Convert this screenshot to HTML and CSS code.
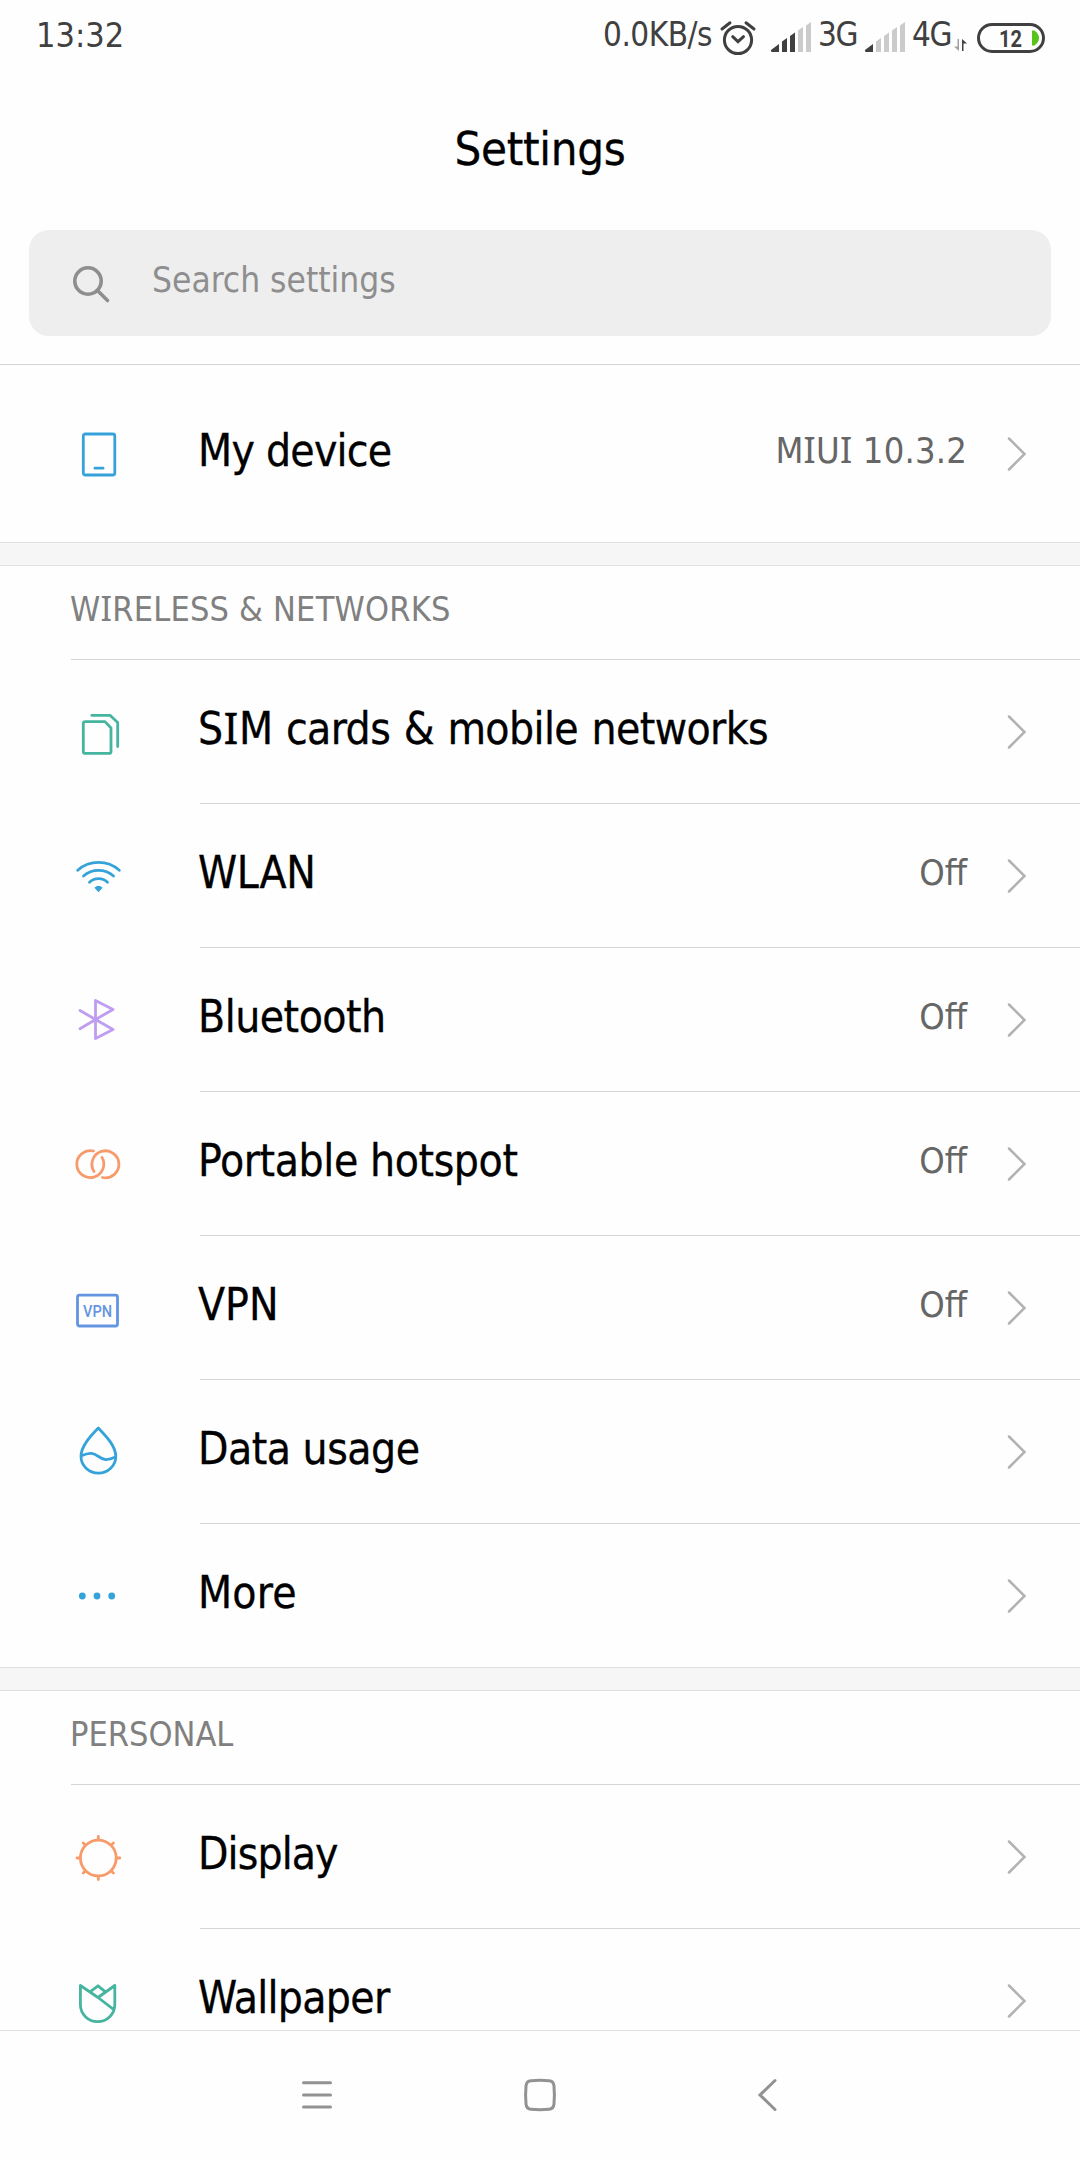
FILE: index.html
```html
<!DOCTYPE html>
<html lang="en">
<head>
<meta charset="utf-8">
<title>Settings</title>
<link rel="stylesheet" href="styles.css">
</head>
<body>
<div class="screen">
  <header class="statusbar">
    <span class="clock">13:32</span>
    <div class="status-right">
      <span class="speed">0.0KB/s</span>
      <svg class="alarm" width="36" height="36" viewBox="0 0 36 36"><circle cx="18" cy="20" r="13.6"/><path d="M2 9 10 2.8M34 9 26 2.8M12.7 16.7 18 21.6 23.5 16.7"/></svg>
      <svg class="signal" width="40" height="30" viewBox="0 0 40 30"><path d="M0 29.500 V28 L8 22V30H1zM11 19.500 16 16V30H11zM19 14 24 10.500V30H19z"/><path class="dim" d="M27 8.500 32 5V30H27zM35 3.500 40 0V30H35z"/></svg>
      <span class="net net-3g">3G</span>
      <svg class="signal" width="40" height="30" viewBox="0 0 40 30"><path d="M0 29.500 V28 L8 22V30H1z"/><path class="dim" d="M11 19.500 16 16V30H11zM19 14 24 10.500V30H19zM27 8.500 32 5V30H27zM35 3.500 40 0V30H35z"/></svg>
      <span class="net net-4g">4G</span>
      <svg class="updown" width="13" height="13" viewBox="0 0 13 13"><path class="dim" d="M5 0V12L0 7.500H3.500V0z"/><path d="M8 12V0L13 4.500H9.500V12z"/></svg>
      <svg class="battery" width="68" height="30" viewBox="0 0 68 30"><rect x="1.500" y="1.500" width="65" height="27" rx="13.500"/><path d="M55 7.500h2.500Q62 11 62 15T57.500 22.500H55z"/><text x="22" y="24" textLength="23" lengthAdjust="spacingAndGlyphs">12</text></svg>
    </div>
  </header>

  <h1 class="title">Settings</h1>

  <div class="search">
    <svg width="38" height="38" viewBox="0 0 38 38"><circle cx="15" cy="15" r="13.200"/><path d="M24.500 24.500 34.500 34.500"/></svg>
    <span>Search settings</span>
  </div>

  <main class="list">
    <section class="group group-device">
      <a class="row">
        <svg class="icon blue" viewBox="0 0 48 48"><rect x="9.300" y="4" width="31.500" height="41" rx="2"/><path d="M21 38.200H29"/></svg>
        <span class="label w-device">My device</span><span class="value w-miui">M<i>I</i>U<i>I</i> 10.3.2</span>
        <svg class="chevron" viewBox="0 0 18 34"><path d="M1 1.500 16.500 17 1 32.500"/></svg>
      </a>
    </section>

    <section class="group">
      <h2 class="w-wireless">W<i>I</i>RELESS &amp; NETWORKS</h2>
      <a class="row">
        <svg class="icon green" viewBox="0 0 48 48"><path d="M11.300 13.600H31L37 20V43.400Q37 45.400 35 45.400H11.300Q9.300 45.400 9.300 43.400V15.600Q9.300 13.600 11.300 13.600zM17.800 7.300H36L43.700 14.500V38.500"/></svg>
        <span class="label w-sim">S<i>I</i>M cards &amp; mobile networks</span>
        <svg class="chevron" viewBox="0 0 18 34"><path d="M1 1.500 16.500 17 1 32.500"/></svg>
      </a>
      <a class="row">
        <svg class="icon blue" viewBox="0 0 48 48"><path d="M3.700 18.300A31.500 31.500 0 0 1 45.300 18.300M9.500 24A23 23 0 0 1 39.500 24M15.500 30.300A13 13 0 0 1 33.500 30.300"/><path class="solid" d="M20.400 35.800Q24.500 31.500 28.600 35.800L24.500 40.300z"/></svg>
        <span class="label w-wlan">WLAN</span><span class="value">Off</span>
        <svg class="chevron" viewBox="0 0 18 34"><path d="M1 1.500 16.500 17 1 32.500"/></svg>
      </a>
      <a class="row">
        <svg class="icon purple" viewBox="0 0 48 48"><path d="M6 14.500 21.500 23.500 39 33.500 21.500 42.500V4.500L39 13.500 21.500 23.500 6 32.700"/></svg>
        <span class="label w-bluetooth">Bluetooth</span><span class="value">Off</span>
        <svg class="chevron" viewBox="0 0 18 34"><path d="M1 1.500 16.500 17 1 32.500"/></svg>
      </a>
      <a class="row">
        <svg class="icon orange" viewBox="0 0 48 48"><path d="M28 17.400A13.500 13.500 0 1 1 19.500 11M20 31.500A13.500 13.500 0 1 1 28.500 37.500"/></svg>
        <span class="label w-hotspot">Portable hotspot</span><span class="value">Off</span>
        <svg class="chevron" viewBox="0 0 18 34"><path d="M1 1.500 16.500 17 1 32.500"/></svg>
      </a>
      <a class="row">
        <svg class="icon indigo" viewBox="0 0 48 48"><rect x="3.500" y="11.200" width="40" height="30.800" rx="2"/><text x="9" y="32.700" textLength="29" lengthAdjust="spacingAndGlyphs">VPN</text></svg>
        <span class="label w-vpn">VPN</span><span class="value">Off</span>
        <svg class="chevron" viewBox="0 0 18 34"><path d="M1 1.500 16.500 17 1 32.500"/></svg>
      </a>
      <a class="row">
        <svg class="icon blue" viewBox="0 0 48 48"><path d="M24.300 0C17 7.500 7 18 7 28.500A17.300 16.500 0 0 0 41.800 28.500C41.800 18 31.500 7.500 24.300 0zM7.500 27.800C16 24 19.500 25 24.500 28.500S33 33 41.500 29"/></svg>
        <span class="label w-data">Data usage</span>
        <svg class="chevron" viewBox="0 0 18 34"><path d="M1 1.500 16.500 17 1 32.500"/></svg>
      </a>
      <a class="row">
        <svg class="icon blue" viewBox="0 0 48 48"><g class="solid"><circle cx="8.300" cy="24" r="3.400"/><circle cx="23" cy="24" r="3.400"/><circle cx="37.700" cy="24" r="3.400"/></g></svg>
        <span class="label w-more">More</span>
        <svg class="chevron" viewBox="0 0 18 34"><path d="M1 1.500 16.500 17 1 32.500"/></svg>
      </a>
    </section>

    <section class="group">
      <h2 class="w-personal">PERSONAL</h2>
      <a class="row">
        <svg class="icon orange" viewBox="0 0 48 48"><circle cx="24.300" cy="25" r="17.900"/><path d="M24.300 6V3.500M24.300 44V46.500M5.300 25H3M43.300 25H45.800M11 11.700 9.200 9.900M37.600 11.700 39.400 9.900M11 38.300 9.200 40.100M37.600 38.300 39.400 40.100"/></svg>
        <span class="label w-display">Display</span>
        <svg class="chevron" viewBox="0 0 18 34"><path d="M1 1.500 16.500 17 1 32.500"/></svg>
      </a>
      <a class="row">
        <svg class="icon green" viewBox="0 0 48 48"><path d="M39.500 32.300 24 20.500 6.400 8.500V27.500A17.200 17.200 0 0 0 40.800 27.500V8.500L24 20.500M16 14.800 24 8.800 31.500 14.800"/></svg>
        <span class="label w-wallpaper">Wallpaper</span>
        <svg class="chevron" viewBox="0 0 18 34"><path d="M1 1.500 16.500 17 1 32.500"/></svg>
      </a>
    </section>
  </main>

  <nav class="navbar">
    <svg width="30" height="32" viewBox="0 0 30 32"><path d="M1.500 3.700H28.500M1.500 16H28.500M1.500 28H28.500"/></svg>
    <svg width="32" height="32" viewBox="0 0 32 32"><path d="M7 1.700Q16 1 25 1.700 29.500 2 30 7 30.800 16 30 25 29.500 30 25 30.300 16 31 7 30.300 2.500 30 2 25 1.200 16 2 7 2.500 2 7 1.700z"/></svg>
    <svg width="19" height="32" viewBox="0 0 19 32"><path d="M17 1.500 2 16 17 30.500"/></svg>
  </nav>
</div>
</body>
</html>
```
FILE: styles.css
```css
*, *::after { box-sizing: border-box; }
body { margin: 0; background: #fefefe; }
svg { display: block; flex: none; fill: none; stroke-linecap: round; overflow: visible; }

.screen {
  display: flex;
  flex-direction: column;
  width: 1080px;
  height: 2160px;
  overflow: hidden;
  font-family: "DejaVu Sans Condensed", "DejaVu Sans", sans-serif;
  font-stretch: condensed;
  color: #000;
  white-space: nowrap;
}
/* capital I with bars */
i { font-family: "Noto Sans", sans-serif; font-stretch: normal; font-style: normal; line-height: 0; }

.statusbar {
  display: flex;
  justify-content: space-between;
  height: 76px;
  padding: 0 35px 0 36px;
  color: #404040;
  font-size: 33px;
  line-height: 69px;
}
.clock { font-size: 34px; line-height: 70px; }
.status-right { display: flex; }
.speed { width: 116px; letter-spacing: -0.5px; }
.alarm { margin: 20px 15px 0 1px; stroke: #404040; stroke-width: 3; }
.signal { margin-top: 22px; fill: #404040; }
.dim { fill: #cbcbcb; }
.net { letter-spacing: -1.5px; }
.net-3g { width: 46px; padding-left: 7px; margin-right: 8px; }
.net-4g { width: 42px; padding-left: 7px; margin-right: 7px; }
.updown { margin: 39px 10px 0 0; fill: #404040; }
.updown .dim { fill: #a0a0a0; }
.battery { margin-top: 23px; stroke: #404040; stroke-width: 3; }
.battery path { fill: #56c419; stroke: none; }
.battery text { font: 700 24px Roboto, sans-serif; fill: #404040; stroke: none; }

.title {
  height: 154px;
  margin: 0;
  text-align: center;
  font-size: 47px;
  font-weight: 400;
  line-height: 146px;
  letter-spacing: -0.3px;
  -webkit-text-stroke: 0.3px;
}

.search {
  display: flex;
  align-items: center;
  height: 106px;
  margin: 0 29px 28px;
  padding-left: 44px;
  border-radius: 20px;
  background: #eee;
  color: #8e8e8e;
  font-size: 35px;
}
.search svg { width: 38px; margin-right: 41px; stroke: #8e8e8e; stroke-width: 3.600; margin-top: 4px; }
.search span { padding-bottom: 7px; }

.list { flex: 1; min-height: 0; overflow: hidden; border-top: 1px solid #d4d4d4; }
.group:not(:last-child)::after {
  content: "";
  display: block;
  height: 24px;
  border: solid #e0e0e0;
  border-width: 1px 0;
  background: #f6f6f6;
}
h2 {
  height: 94px;
  margin: 0 0 0 71px;
  border-bottom: 1px solid #d6d6d6;
  color: #808080;
  font-size: 34px;
  font-weight: 400;
  line-height: 87px;
  text-indent: -1px;
}
.row {
  display: flex;
  align-items: center;
  height: 144px;
  padding: 0 54px 0 74px;
  background: linear-gradient(#d6d6d6, #d6d6d6) no-repeat 200px 100% / 880px 1px;
}
.row:last-child { margin-bottom: -1px; background: none; }
.label {
  flex: 1;
  align-self: stretch;
  margin-left: 76px;
  font-size: 44px;
  line-height: 137px;
  -webkit-text-stroke: 0.3px;
}
.value { padding-bottom: 8px; margin-right: 41px; color: #666; font-size: 36px; }
.icon { width: 48px; height: 48px; stroke: currentColor; stroke-width: 2.800; stroke-linejoin: round; }
.chevron { width: 18px; height: 34px; stroke: #b2b2b2; stroke-width: 2.500; }
.solid { fill: currentColor; stroke: none; }
.icon text { font: 500 17px Roboto, sans-serif; fill: currentColor; stroke: none; }
.blue { color: #35a3da; }
.green { color: #46b5a0; }
.purple { color: #bf9df0; }
.orange { color: #f79b6b; }
.indigo { color: #6495e0; }

.group-device .row { height: 177px; margin-bottom: 0; }
.group-device .label { line-height: 171px; }
.group-device .value { padding-bottom: 6px; }

/* tracking, tuned per string */
.w-device { letter-spacing: -0.75px; }
.w-miui { letter-spacing: 0.2px; }
.w-wireless { letter-spacing: 0.2px; }
.w-sim { letter-spacing: -0.6px; word-spacing: 1.5px; }
.w-sim i { margin: 0 1px; }
.w-wlan { letter-spacing: -0.3px; }
.w-bluetooth { letter-spacing: -0.5px; }
.w-hotspot { letter-spacing: -0.4px; }
.w-data { letter-spacing: -0.5px; }
.w-more { letter-spacing: 0.2px; }
.w-display { letter-spacing: -0.9px; }
.w-wallpaper { letter-spacing: -0.7px; }

.navbar {
  display: flex;
  height: 130px;
  padding: 48px 0 0 302px;
  border-top: 1px solid #e2e2e2;
}
.navbar svg { stroke: #929292; stroke-width: 3; }
.navbar svg:nth-child(2) { margin: 0 202px 0 192px; }
```
